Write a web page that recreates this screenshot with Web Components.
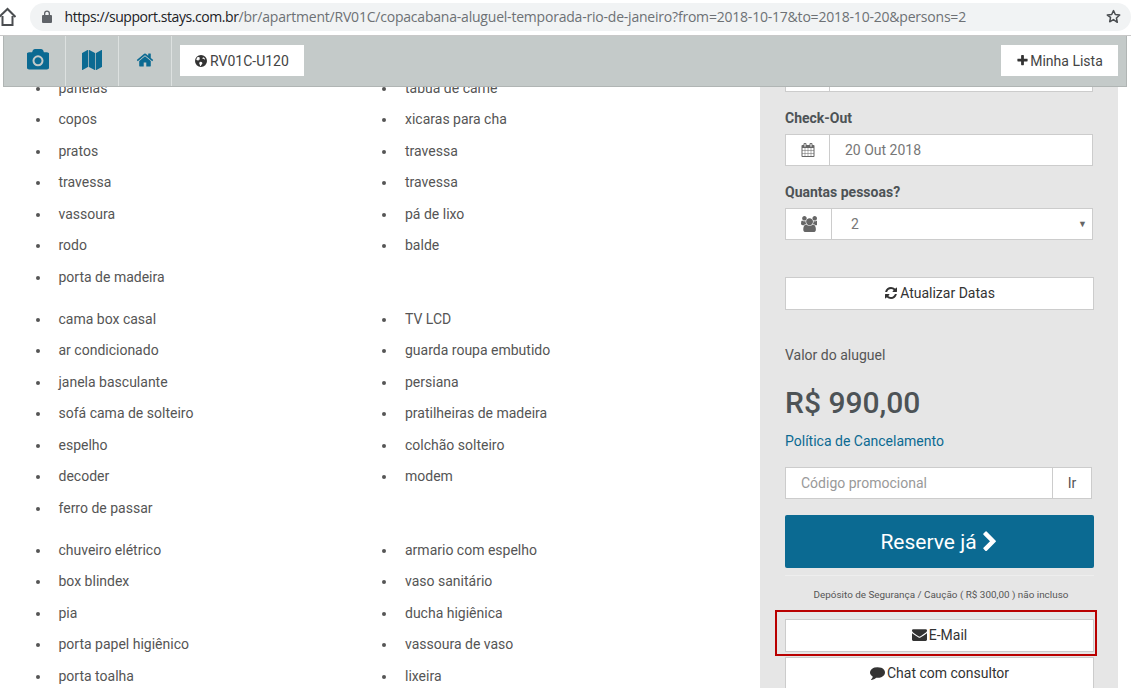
<!DOCTYPE html>
<html lang="pt-BR">
<head>
<meta charset="utf-8">
<title>Copacabana aluguel temporada</title>
<style>
  html, body { margin: 0; height: 688px; overflow: hidden; background: #fff; }
  body { font-family: Roboto, "Liberation Sans", sans-serif; font-size: 14px; color: #555; display: flex; flex-direction: column; position: relative; }
</style>
</head>
<body>
<browser-bar url-host="https://support.stays.com.br" url-path="/br/apartment/RV01C/copacabana-aluguel-temporada-rio-de-janeiro?from=2018-10-17&amp;to=2018-10-20&amp;persons=2"></browser-bar>

<top-nav code="RV01C-U120"></top-nav>

<rental-page>
  <item-grid>
    <item-list>
      <li>panelas</li><li>copos</li><li>pratos</li><li>travessa</li><li>vassoura</li><li>rodo</li><li>porta de madeira</li>
    </item-list>
    <item-list>
      <li>tabua de carne</li><li>xicaras para cha</li><li>travessa</li><li>travessa</li><li>pá de lixo</li><li>balde</li>
    </item-list>
    <item-list>
      <li>cama box casal</li><li>ar condicionado</li><li>janela basculante</li><li>sofá cama de solteiro</li><li>espelho</li><li>decoder</li><li>ferro de passar</li>
    </item-list>
    <item-list>
      <li>TV LCD</li><li>guarda roupa embutido</li><li>persiana</li><li>pratilheiras de madeira</li><li>colchão solteiro</li><li>modem</li>
    </item-list>
    <item-list>
      <li>chuveiro elétrico</li><li>box blindex</li><li>pia</li><li>porta papel higiênico</li><li>porta toalha</li>
    </item-list>
    <item-list>
      <li>armario com espelho</li><li>vaso sanitário</li><li>ducha higiênica</li><li>vassoura de vaso</li><li>lixeira</li>
    </item-list>
  </item-grid>
  <booking-panel></booking-panel>
</rental-page>

<script>
const ICONS = {
  camera: 'M896 672q119 0 203.5 84.5t84.5 203.5-84.5 203.5-203.5 84.5-203.5-84.5-84.5-203.5 84.5-203.5 203.5-84.5zm704-416q106 0 181 75t75 181v896q0 106-75 181t-181 75h-1408q-106 0-181-75t-75-181v-896q0-106 75-181t181-75h224l51-136q19-49 69.5-84.5t103.5-35.5h512q53 0 103.5 35.5t69.5 84.5l51 136h224zm-704 1152q185 0 316.5-131.5t131.5-316.5-131.5-316.5-316.5-131.5-316.5 131.5-131.5 316.5 131.5 316.5 316.5 131.5z',
  map: 'M512 0q13 0 22.5 9.5t9.5 22.5v1472q0 20-17 28l-480 256q-7 4-15 4-13 0-22.5-9.5t-9.5-22.5v-1472q0-20 17-28l480-256q7-4 15-4zm1248 0q13 0 22.5 9.5t9.5 22.5v1472q0 20-17 28l-480 256q-7 4-15 4-13 0-22.5-9.5t-9.5-22.5v-1472q0-20 17-28l480-256q7-4 15-4zm-1120 0q8 0 14 3l512 256q18 10 18 29v1472q0 13-9.5 22.5t-22.5 9.5q-8 0-14-3l-512-256q-18-10-18-29v-1472q0-13 9.5-22.5t22.5-9.5z',
  home: 'M1472 992v480q0 26-19 45t-45 19h-384v-384h-256v384h-384q-26 0-45-19t-19-45v-480q0-1 .5-3t.5-3l575-474 575 474q1 2 1 6zm223-69l-62 74q-8 9-21 11h-3q-13 0-21-7l-692-577-692 577q-12 8-24 7-13-2-21-11l-62-74q-8-10-7-23.5t11-21.5l719-599q32-26 76-26t76 26l244 204v-195q0-14 9-23t23-9h192q14 0 23 9t9 23v408l219 182q10 8 11 21.5t-7 23.5z',
  globe: 'M896 128a768 768 0 1 0 0 1536a768 768 0 1 0 0-1536zM420 420q110 -60 240 -50l60 90 -40 80 90 60 -30 110 -130 30 -60 110 -120 -60 -130 -30 q20 -200 120 -340zM760 1000l210 30 110 130 -40 130 -120 110 -30 130 -90 0 -70 -190 -60 -110 30 -130zM1180 420q170 90 250 260l-120 20 -60 -90 -100 30 -90 -110 z',
  plus: 'M1600 736v192q0 40-28 68t-68 28h-416v416q0 40-28 68t-68 28h-192q-40 0-68-28t-28-68v-416h-416q-40 0-68-28t-28-68v-192q0-40 28-68t68-28h416v-416q0-40 28-68t68-28h192q40 0 68 28t28 68v416h416q40 0 68 28t28 68z',
  calendar: 'M192 1664h288v-288h-288v288zm352 0h320v-288h-320v288zm-352-352h288v-320h-288v320zm352 0h320v-320h-320v320zm-352-384h288v-288h-288v288zm736 736h320v-288h-320v288zm-384-736h320v-288h-320v288zm768 736h288v-288h-288v288zm-384-352h320v-320h-320v320zm-352-864v-288q0-13-9.5-22.5t-22.5-9.5h-64q-13 0-22.5 9.5t-9.5 22.5v288q0 13 9.5 22.5t22.5 9.5h64q13 0 22.5-9.5t9.5-22.5zm736 864h288v-320h-288v320zm-384-384h320v-288h-320v288zm384 0h288v-288h-288v288zm32-480v-288q0-13-9.5-22.5t-22.5-9.5h-64q-13 0-22.5 9.5t-9.5 22.5v288q0 13 9.5 22.5t22.5 9.5h64q13 0 22.5-9.5t9.5-22.5zm384-64v1280q0 52-38 90t-90 38h-1408q-52 0-90-38t-38-90v-1280q0-52 38-90t90-38h128v-96q0-66 47-113t113-47h64q66 0 113 47t47 113v96h384v-96q0-66 47-113t113-47h64q66 0 113 47t47 113v96h128q52 0 90 38t38 90z',
  users: 'M593 896q-162 5-265 128h-134q-82 0-138-40.5t-56-118.5q0-353 124-353 6 0 43.5 21t97.5 42.5 119 21.5q67 0 133-23-5 37-5 66 0 139 81 256zm1071 637q0 120-73 189.5t-194 69.5h-874q-121 0-194-69.5t-73-189.5q0-53 3.5-103.5t14-109 26.5-108.5 43-97.5 62-81 85.5-53.5 111.5-20q10 0 43 21.5t73 48 107 48 135 21.5 135-21.5 107-48 73-48 43-21.5q61 0 111.5 20t85.5 53.5 62 81 43 97.5 26.5 108.5 14 109 3.5 103.5zm-1024-1277q0 106-75 181t-181 75-181-75-75-181 75-181 181-75 181 75 75 181zm704 384q0 159-112.5 271.5t-271.5 112.5-271.5-112.5-112.5-271.5 112.5-271.5 271.5-112.5 271.5 112.5 112.5 271.5zm576 225q0 78-56 118.5t-138 40.5h-134q-103-123-265-128 81-117 81-256 0-29-5-66 66 23 133 23 59 0 119-21.5t97.5-42.5 43.5-21q124 0 124 353zm-128-609q0 106-75 181t-181 75-181-75-75-181 75-181 181-75 181 75 75 181z',
  refresh: 'M1639 1056q0 5-1 7-64 268-268 434.5t-478 166.5q-146 0-282.5-55t-243.5-157l-129 129q-19 19-45 19t-45-19-19-45v-448q0-26 19-45t45-19h448q26 0 45 19t19 45-19 45l-137 137q71 66 161 102t187 36q134 0 250-65t186-179q11-17 53-117 8-23 30-23h192q13 0 22.5 9.5t9.5 22.5zm25-800v448q0 26-19 45t-45 19h-448q-26 0-45-19t-19-45 19-45l138-138q-148-137-349-137-134 0-250 65t-186 179q-11 17-53 117-8 23-30 23h-199q-13 0-22.5-9.5t-9.5-22.5v-7q65-268 270-434.5t480-166.5q146 0 284 55.5t245 156.5l130-129q19-19 45-19t45 19 19 45z',
  envelope: 'M1792 710v794q0 66-47 113t-113 47h-1472q-66 0-113-47t-47-113v-794q44 49 101 87 362 246 497 345 57 42 92.5 65.5t94.5 48 110 24.5h2q51 0 110-24.5t94.5-48 92.5-65.5q170-123 498-345 57-39 100-87zm0-294q0 79-49 151t-122 123q-376 261-468 325-10 7-42.5 30.5t-54 38-52 32.5-57.5 27-50 9h-2q-23 0-50-9t-57.5-27-52-32.5-54-38-42.5-30.5q-91-64-262-182.5t-205-142.5q-62-42-117-115.5t-55-136.5q0-78 41.5-130t118.5-52h1472q65 0 112.5 47t47.5 113z',
  comment: 'M1792 896q0 174-120 321.5t-326 233-450 85.5q-70 0-145-8-198 175-460 242-49 14-114 22-17 2-30.5-9t-17.5-29v-1q-3-4-.5-12t2-10 4.5-9.5l6-9 7-8.5 8-9q7-8 31-34.5t34.5-38 31-39.5 32.5-51 27-59 26-76q-157-89-247.5-220t-90.5-281q0-130 71-248.5t191-204.5 286-136.5 348-50.5q244 0 450 85.5t326 233 120 321.5z',
  chevron: 'M1363 877l-742 742q-19 19-45 19t-45-19l-166-166q-19-19-19-45t19-45l531-531-531-531q-19-19-19-45t19-45l166-166q19-19 45-19t45 19l742 742q19 19 19 45t-19 45z'
};

class FaIcon extends HTMLElement {
  connectedCallback() {
    const size = this.getAttribute('size') || 14;
    const color = this.getAttribute('color') || 'currentColor';
    this.attachShadow({ mode: 'open' }).innerHTML = `
      <style>
        :host { display: inline-flex; flex: none; line-height: 0; }
      </style>
      <svg width="${size}" height="${size}" viewBox="0 0 1792 1792" fill="${color}" fill-rule="evenodd"><path d="${ICONS[this.getAttribute('name')]}"/></svg>`;
  }
}
customElements.define('fa-icon', FaIcon);

class BrowserBar extends HTMLElement {
  connectedCallback() {
    this.attachShadow({ mode: 'open' }).innerHTML = `
      <style>
        :host { display: flex; flex: none; height: 36px; box-sizing: border-box; align-items: center; gap: 14px; padding: 0 0 1px 0; background: #fff; border-bottom: 1px solid #c8c8c8; }
        .home { flex: none; display: flex; }
        .omnibox { flex: 1; height: 28px; box-sizing: border-box; display: flex; align-items: center; background: #f1f3f4; border-radius: 14px; padding: 0 10px 1px 12px; }
        .lock { flex: none; margin-right: 12.5px; }
        .url { flex: 1; white-space: nowrap; overflow: hidden; font: 14px "Open Sans", sans-serif; letter-spacing: -.21px; color: #6d7175; }
        .url b { font-weight: 400; letter-spacing: -.42px; color: #202124; }
        .star { flex: none; }
      </style>
      <svg class="home" width="16" height="20" viewBox="0 0 16 20"><path d="M-1 10 7.5 2l8 8M2.5 9v9h10V9" fill="none" stroke="#4a4d50" stroke-width="2"/></svg>
      <div class="omnibox">
        <svg class="lock" width="10" height="13" viewBox="0 0 10 13"><path d="M2 5V3.5a3 3 0 0 1 6 0V5h1a1 1 0 0 1 1 1v6a1 1 0 0 1-1 1H1a1 1 0 0 1-1-1V6a1 1 0 0 1 1-1zm1.3 0h3.4V3.5a1.7 1.7 0 0 0-3.4 0z" fill="#5f6368" fill-rule="evenodd"/></svg>
        <span class="url"><b>${this.getAttribute('url-host')}</b>${this.getAttribute('url-path').replace(/&/g, '&amp;')}</span>
        <svg class="star" width="15" height="15" viewBox="0 0 24 24"><path d="M12 2.5l2.9 6.4 7 .8-5.2 4.7 1.4 6.9L12 16.9l-6.1 3.5 1.4-6.9L2.1 9.7l7-.8z" fill="none" stroke="#4a4d50" stroke-width="2.4" stroke-linejoin="round"/></svg>
      </div>`;
  }
}
customElements.define('browser-bar', BrowserBar);

class TopNav extends HTMLElement {
  connectedCallback() {
    this.attachShadow({ mode: 'open' }).innerHTML = `
      <style>
        :host { position: absolute; z-index: 5; top: 36px; left: 3px; right: 4px; height: 51px; box-sizing: border-box; display: flex; align-items: center; padding: 0 8px 0 9px; background: #c4cac9; border: 1px solid #b0b5b4; border-top: none; color: #0b6a92; }
        .cell { flex: none; width: 53px; height: 100%; box-sizing: border-box; display: flex; align-items: center; justify-content: center; border-right: 1px solid #dde1e0; padding-bottom: 2px; }
        .cell.first { padding-right: 2px; }
        .tab { flex: none; display: flex; align-items: center; height: 31px; margin-bottom: 1px; background: #fff; color: #444; font-size: 14px; }
        .code { width: 124px; margin-left: 8px; padding-left: 14px; box-sizing: border-box; gap: 2px; }
        .list { width: 117px; margin-left: auto; justify-content: center; gap: 1px; }
      </style>
      <div class="cell first"><fa-icon name="camera" size="22"></fa-icon></div>
      <div class="cell"><fa-icon name="map" size="20"></fa-icon></div>
      <div class="cell"><fa-icon name="home" size="18"></fa-icon></div>
      <div class="tab code"><fa-icon name="globe" size="14" color="#333"></fa-icon>${this.getAttribute('code')}</div>
      <div class="tab list"><fa-icon name="plus" size="13" color="#333"></fa-icon>Minha Lista</div>`;
  }
}
customElements.define('top-nav', TopNav);

class RentalPage extends HTMLElement {
  connectedCallback() {
    this.attachShadow({ mode: 'open' }).innerHTML = `
      <style>
        :host { display: grid; grid-template-columns: 760px 358px; flex: 1; min-height: 0; overflow: hidden; }
      </style>
      <slot></slot>`;
  }
}
customElements.define('rental-page', RentalPage);

class ItemGrid extends HTMLElement {
  connectedCallback() {
    this.attachShadow({ mode: 'open' }).innerHTML = `
      <style>
        /* the lists come in pairs, left and right column */
        :host { display: grid; grid-template-columns: 346.5px 346.5px; align-content: start; padding-top: 36.5px; }
      </style>
      <slot></slot>`;
  }
}
customElements.define('item-grid', ItemGrid);

class ItemList extends HTMLElement {
  connectedCallback() {
    this.attachShadow({ mode: 'open' }).innerHTML = `
      <style>
        :host { display: block; margin-bottom: 10.5px; }
        ul { margin: 0; padding: 0 0 0 50.5px; list-style: disc; }
        ::slotted(li) { height: 31.5px; line-height: 31.5px; padding-left: 8px; color: #555; white-space: nowrap; }
      </style>
      <ul><slot></slot></ul>`;
  }
}
customElements.define('item-list', ItemList);

class ActionButton extends HTMLElement {
  connectedCallback() {
    this.attachShadow({ mode: 'open' }).innerHTML = `
      <style>
        :host { display: flex; align-items: center; justify-content: center; gap: 2px; box-sizing: border-box; height: 33px; padding: 0 0 2px 0; background: #fff; border: 1px solid #ccc; color: #333; font-size: 14px; }
      </style>
      <slot></slot>`;
  }
}
customElements.define('action-button', ActionButton);

class FieldRow extends HTMLElement {
  connectedCallback() {
    const iconWidth = this.getAttribute('icon-width') || 44;
    this.attachShadow({ mode: 'open' }).innerHTML = `
      <style>
        :host { display: flex; box-sizing: border-box; height: 32px; margin-right: 1px; background: #fff; border: 1px solid #ccc; color: #777; font-size: 14px; }
        .icon { flex: none; width: ${iconWidth}px; box-sizing: border-box; display: flex; align-items: center; justify-content: center; border-right: 1px solid #ccc; color: #666; }
        .value { flex: 1; display: flex; align-items: center; padding: 0 5px 0 15px; }
      </style>
      <div class="icon"><slot name="icon"></slot></div>
      <div class="value"><slot></slot></div>`;
  }
}
customElements.define('field-row', FieldRow);

class BookingPanel extends HTMLElement {
  connectedCallback() {
    this.attachShadow({ mode: 'open' }).innerHTML = `
      <style>
        :host { display: flex; flex-direction: column; box-sizing: border-box; padding: 24px 24px 0 25px; background: #e6e6e6; color: #555; }
        .label { height: 20px; line-height: 20px; font-weight: 700; color: #4d5356; }
        .check-out { margin-top: 16px; }
        .field { margin-top: 6px; }
        .people { margin-top: 16px; }
        .update { margin-top: 37px; }
        .rent { margin-top: 35px; height: 20px; line-height: 20px; }
        .price { margin-top: 18px; height: 40px; line-height: 40px; font-size: 30px; font-weight: 500; color: #4d5356; }
        .policy { margin-top: 8px; height: 20px; line-height: 20px; color: #0b6a92; }
        .promo { margin: 16px 2px 0 0; display: flex; box-sizing: border-box; height: 32px; background: #fff; border: 1px solid #ccc; }
        .promo span { flex: 1; display: flex; align-items: center; padding-left: 15px; color: #999; }
        .promo b { flex: none; width: 38px; display: flex; align-items: center; justify-content: center; border-left: 1px solid #ccc; font-weight: 400; color: #555; }
        .reserve { margin-top: 16px; height: 53px; box-sizing: border-box; padding-left: 2px; display: flex; align-items: center; justify-content: center; gap: 2px; background: #0b6a92; border-radius: 2px; color: #fff; font-size: 21px; }
        hr { margin: 7px 0 0; border: none; height: 1px; background: #eee; }
        .note { margin-top: 12px; height: 14px; line-height: 14px; padding-left: 3px; text-align: center; font-size: 9.9px; color: #555; }
        .mail { position: relative; margin-top: 17px; }
        .mail::after { content: ""; position: absolute; left: -11px; right: -4px; top: -10px; bottom: -5px; border: 2px solid #b90000; pointer-events: none; }
        .chat { margin-top: 5px; }
      </style>
      <field-row></field-row>
      <div class="label check-out">Check-Out</div>
      <field-row class="field"><fa-icon slot="icon" name="calendar" size="14"></fa-icon>20 Out 2018</field-row>
      <div class="label people">Quantas pessoas?</div>
      <field-row class="field" icon-width="46"><fa-icon slot="icon" name="users" size="16"></fa-icon><span style="flex:1;padding-left:4px">2</span><span style="font-size:9px;color:#666">▼</span></field-row>
      <action-button class="update"><fa-icon name="refresh" size="14"></fa-icon>Atualizar Datas</action-button>
      <div class="rent">Valor do aluguel</div>
      <div class="price">R$ 990,00</div>
      <div class="policy">Política de Cancelamento</div>
      <div class="promo"><span>Código promocional</span><b>Ir</b></div>
      <div class="reserve">Reserve já<fa-icon name="chevron" size="22"></fa-icon></div>
      <hr>
      <div class="note">Depósito de Segurança / Caução ( R$ 300,00 ) não incluso</div>
      <action-button class="mail"><fa-icon name="envelope" size="15"></fa-icon>E-Mail</action-button>
      <action-button class="chat"><fa-icon name="comment" size="15"></fa-icon>Chat com consultor</action-button>`;
  }
}
customElements.define('booking-panel', BookingPanel);
</script>
</body>
</html>
